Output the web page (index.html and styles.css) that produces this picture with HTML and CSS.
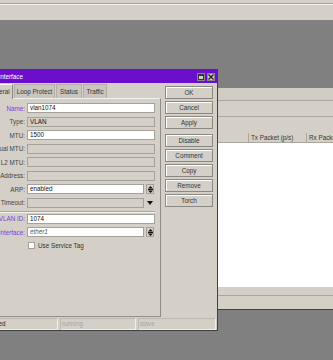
FILE: index.html
```html
<!DOCTYPE html>
<html lang="en">
<head>
    <meta charset="UTF-8">
    <title>Interface</title>
    <link rel="stylesheet" href="styles.css">
</head>
<body>
    <div class="topbar"></div>

    <div class="desk">
        <div class="bgwin">
            <div class="band b1"></div>
            <div class="band b2"></div>
            <div class="band b3"></div>
            <div class="thead">
                <div class="th c1"></div>
                <div class="th c2">Tx Packet (p/s)</div>
                <div class="th c3">Rx Packet (p/s)</div>
            </div>
            <div class="tbody"></div>
            <div class="foot1"></div>
            <div class="foot2"></div>
        </div>

        <div class="dialog">
            <div class="title">
                <span>Interface</span>
                <div class="tbtns">
                    <div class="tbtn"><svg width="6" height="6" viewBox="0 0 6 6"><rect x="0.5" y="0.5" width="5" height="5" fill="none" stroke="#333"/><line x1="0" y1="1.5" x2="6" y2="1.5" stroke="#333"/></svg></div>
                    <div class="tbtn"><svg width="6" height="6" viewBox="0 0 6 6"><path d="M0.5 0.5 L5.5 5.5 M5.5 0.5 L0.5 5.5" stroke="#222" stroke-width="1.4"/></svg></div>
                </div>
            </div>

            <div class="main">
                <div class="left">
                    <div class="tabs">
                        <div class="tab sel t1">General</div>
                        <div class="tab t2">Loop Protect</div>
                        <div class="tab t3">Status</div>
                        <div class="tab t4">Traffic</div>
                    </div>
                    <div class="panel">
                        <div class="row"><label class="req">Name:</label><div class="field">vlan1074</div></div>
                        <div class="row"><label>Type:</label><div class="field off">VLAN</div></div>
                        <div class="row"><label>MTU:</label><div class="field">1500</div></div>
                        <div class="row"><label>Actual MTU:</label><div class="field off"></div></div>
                        <div class="row"><label>L2 MTU:</label><div class="field off"></div></div>
                        <div class="row"><label>MAC Address:</label><div class="field off"></div></div>
                        <div class="row"><label>ARP:</label><div class="field short">enabled</div><div class="ddbtn"><svg width="5" height="7" viewBox="0 0 5 7"><path d="M0 2.5 L2.5 0 L5 2.5 Z M0 4.5 L5 4.5 L2.5 7 Z" fill="#111"/><rect x="0" y="3" width="5" height="1" fill="#111"/></svg></div></div>
                        <div class="row"><label>ARP Timeout:</label><div class="field short off"></div><div class="ddarrow"><svg width="6" height="4" viewBox="0 0 6 4"><path d="M0 0 L6 0 L3 4 Z" fill="#111"/></svg></div></div>
                        <div class="sep"></div>
                        <div class="row"><label class="req">VLAN ID:</label><div class="field">1074</div></div>
                        <div class="row"><label class="req">Interface:</label><div class="field short ital">ether1</div><div class="ddbtn"><svg width="5" height="7" viewBox="0 0 5 7"><path d="M0 2.5 L2.5 0 L5 2.5 Z M0 4.5 L5 4.5 L2.5 7 Z" fill="#111"/><rect x="0" y="3" width="5" height="1" fill="#111"/></svg></div></div>
                        <div class="row"><label></label><div class="check"></div><span class="checktext">Use Service Tag</span></div>
                    </div>
                </div>

                <div class="actions">
                    <div class="btn">OK</div>
                    <div class="btn">Cancel</div>
                    <div class="btn gap">Apply</div>
                    <div class="btn">Disable</div>
                    <div class="btn">Comment</div>
                    <div class="btn">Copy</div>
                    <div class="btn">Remove</div>
                    <div class="btn">Torch</div>
                </div>
            </div>

            <div class="status">
                <div class="cell s1">enabled</div>
                <div class="cell s2 dim">running</div>
                <div class="cell s3 dim">slave</div>
            </div>
        </div>
    </div>
</body>
</html>
```

FILE: styles.css
```css
body {
    margin: 0;
    background: #808080;
    font-family: 'Liberation Sans', Arial, sans-serif;
    font-size: 6.3px;
    color: #222;
    overflow: hidden;
    width: 333px;
    height: 360px;
}
.topbar {
    height: 20px;
    box-sizing: border-box;
    background: #d4d0c8;
    border-top: 3px solid #d4d0c8;
    position: relative;
}
.topbar::before {
    content: "";
    position: absolute;
    left: 0;
    right: 0;
    top: 0;
    height: 1px;
    background: #a4a39c;
    border-bottom: 1px solid #f4f3ef;
}
.desk {
    position: relative;
    height: 340px;
}

/* window behind the dialog */
.bgwin {
    position: absolute;
    left: 150px;
    top: 68px;
    width: 200px;
    background: #d4d0c8;
    border-bottom: 1px solid #404040;
}
.band {
    border-bottom: 1px solid #aaa79f;
}
.b1 { height: 12px; background: #d0ccc4; }
.b2 { height: 15px; }
.b3 { height: 16px; border-bottom: none; }
.thead {
    display: flex;
    height: 9px;
    border-bottom: 1px solid #a9a69e;
}
.th {
    line-height: 9px;
    padding-left: 2px;
    border-right: 1px solid #a9a69e;
    white-space: nowrap;
    overflow: hidden;
    color: #333;
}
.c1 { width: 96px; }
.c2 { width: 55px; }
.c3 { width: 40px; border-right: none; }
.tbody {
    height: 144px;
    background: #fff;
}
.foot1 {
    height: 8px;
    border-bottom: 1px solid #a9a69e;
}
.foot2 {
    height: 13px;
}

/* dialog */
.dialog {
    position: absolute;
    left: -20px;
    top: 49px;
    width: 236px;
    height: 260px;
    background: #d4d0c8;
    border: 1px solid #404040;
}
.title {
    height: 13px;
    background: #6b0fcc;
    color: #fff;
    display: flex;
    align-items: center;
    justify-content: space-between;
    padding-left: 17.5px;
    padding-right: 2px;
}
.tbtns {
    display: flex;
    gap: 2px;
}
.tbtn {
    width: 8px;
    height: 8px;
    box-sizing: border-box;
    background: #d4d0c8;
    border: 1px solid #888;
    display: flex;
    align-items: center;
    justify-content: center;
}
.main {
    display: flex;
    height: 234px;
}
.left {
    width: 180px;
}
.tabs {
    display: flex;
    height: 14px;
    padding-top: 1px;
    padding-left: 2px;
    gap: 1px;
}
.tab {
    box-sizing: border-box;
    height: 14px;
    border: 1px solid #b2afa7;
    border-bottom: none;
    background: #cac6be;
    line-height: 13px;
    text-align: center;
    white-space: nowrap;
    color: #333;
}
.tab.sel {
    background: #d4d0c8;
    border-color: #fff #8a8880 #d4d0c8 #fff;
    height: 15px;
    position: relative;
    z-index: 1;
}
.t1 { width: 30px; padding-left: 1px; }
.t2 { width: 41px; }
.t3 { width: 26px; }
.t4 { width: 24px; }
.panel {
    box-sizing: border-box;
    height: 219px;
    border-top: 1px solid #f2f1ed;
    border-right: 1px solid #8f8d86;
    border-bottom: 1px solid #8f8d86;
    padding-top: 4px;
}
.row {
    display: flex;
    align-items: center;
    height: 10px;
    margin-bottom: 3.5px;
}
.row label {
    width: 43px;
    margin-left: 1px;
    margin-right: 2px;
    text-align: right;
    white-space: nowrap;
    color: #444;
}
.row label.req {
    color: #7a3fdc;
}
.field {
    box-sizing: border-box;
    width: 128px;
    height: 10px;
    background: #fff;
    border: 1px solid #a3a19a;
    line-height: 8px;
    padding-left: 2px;
    color: #111;
    white-space: nowrap;
}
.field.off {
    background: #d4d0c8;
}
.field.short {
    width: 117px;
}
.field.ital {
    font-style: italic;
    color: #555;
}
.ddbtn {
    box-sizing: border-box;
    width: 8px;
    height: 10px;
    margin-left: 2px;
    border: 1px solid #a3a19a;
    display: flex;
    align-items: center;
    justify-content: center;
}
.ddarrow {
    width: 8px;
    margin-left: 2px;
    display: flex;
    justify-content: center;
}
.sep {
    height: 0;
    border-top: 1px solid #a9a69e;
    border-bottom: 1px solid #f4f3ef;
    margin: 0 5px 0.5px 0;
}
.check {
    box-sizing: border-box;
    width: 7px;
    height: 7px;
    margin-left: 1px;
    background: #fff;
    border: 1px solid #a3a19a;
}
.checktext {
    margin-left: 3px;
    color: #333;
}
.actions {
    margin-left: 4px;
    padding-top: 3px;
    width: 48px;
}
.btn {
    box-sizing: border-box;
    height: 13px;
    margin-bottom: 2px;
    border: 1px solid #8a8880;
    box-shadow: inset 1px 1px 0 #fff;
    text-align: center;
    line-height: 11px;
    color: #333;
}
.btn.gap {
    margin-bottom: 5px;
}
.status {
    display: flex;
    height: 13px;
    padding-top: 1px;
    box-sizing: border-box;
    gap: 2px;
}
.cell {
    box-sizing: border-box;
    height: 12px;
    border: 1px solid #bcb9b1;
    border-right-color: #f0efeb;
    border-bottom-color: #f0efeb;
    line-height: 10px;
    padding-left: 1px;
    white-space: nowrap;
}
.s1 { width: 77px; }
.s2 { width: 76px; }
.s3 { width: 78px; }
.dim { color: #a8a59e; }
```
